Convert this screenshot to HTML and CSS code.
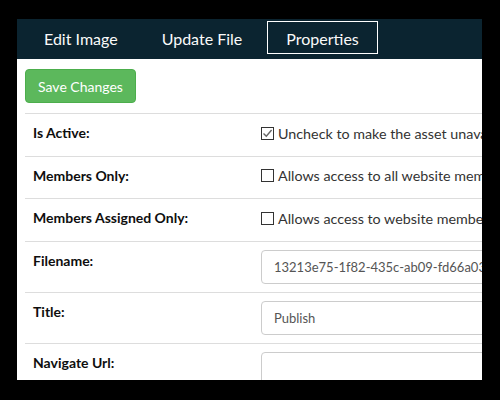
FILE: index.html
```html
<!DOCTYPE html>
<html>
<head>
<meta charset="utf-8">
<link rel="stylesheet" href="styles.css">
</head>
<body>
<div class="panel">
  <nav class="tabs">
    <a class="tab">Edit Image</a>
    <a class="tab">Update File</a>
    <a class="tab active">Properties</a>
  </nav>
  <div class="content">
    <button class="btn-save">Save Changes</button>
    <table class="props">
      <tr class="row-check">
        <th>Is Active:</th>
        <td><label class="chk-line"><span class="chk checked"><svg width="11" height="11" viewBox="0 0 11 11"><path d="M1.5 5.5 L4.3 8.3 L9.6 2" fill="none" stroke="#666" stroke-width="1.4"/></svg></span>Uncheck to make the asset unavailable to the website.</label></td>
      </tr>
      <tr class="row-check">
        <th>Members Only:</th>
        <td><label class="chk-line"><span class="chk"></span>Allows access to all website members only.</label></td>
      </tr>
      <tr class="row-check">
        <th>Members Assigned Only:</th>
        <td><label class="chk-line"><span class="chk"></span>Allows access to website members assigned.</label></td>
      </tr>
      <tr class="row-input">
        <th>Filename:</th>
        <td><input class="field" type="text" value="13213e75-1f82-435c-ab09-fd66a03b7e21.jpg"></td>
      </tr>
      <tr class="row-input">
        <th>Title:</th>
        <td><input class="field" type="text" value="Publish"></td>
      </tr>
      <tr class="row-input">
        <th>Navigate Url:</th>
        <td><input class="field" type="text" value=""></td>
      </tr>
    </table>
  </div>
</div>
</body>
</html>
```

FILE: styles.css
```css
html, body {
  margin: 0;
  padding: 0;
  background: #000;
}
body {
  width: 500px;
  height: 400px;
  overflow: hidden;
  font-family: Lato, "Open Sans", sans-serif;
}
.panel {
  margin: 19px 0 0 17px;
  width: 465px;
  height: 361px;
  background: #fff;
  overflow: hidden;
}
.tabs {
  display: flex;
  align-items: flex-start;
  gap: 6px;
  height: 38px;
  padding: 2px 0 0 8px;
  background: #0b2430;
}
.tab {
  display: block;
  padding: 4px 18px 2px;
  line-height: 25px;
  font-size: 16px;
  color: #fafafa;
  border: 1px solid transparent;
  white-space: nowrap;
}
.tab.active {
  border-color: #fff;
}
.content {
  padding: 10px 0 0 8px;
  width: 700px;
}
.btn-save {
  display: block;
  width: 111px;
  height: 34px;
  margin: 0 0 10px 0;
  padding: 0;
  background: #5cb85c;
  border: 1px solid #4cae4c;
  border-radius: 4px;
  color: #fff;
  font-family: inherit;
  font-size: 14px;
}
.props {
  border-collapse: collapse;
  width: 700px;
}
.props tr {
  border-top: 1px solid #ddd;
}
.props th {
  width: 220px;
  text-align: left;
  vertical-align: top;
  padding: 8px 8px 0;
  font-size: 14px;
  font-weight: bold;
  line-height: 22px;
  color: #0e0e0e;
  white-space: nowrap;
}
.props td {
  vertical-align: top;
  padding: 8px 0 0;
}
.row-check th, .row-check td {
  padding-bottom: 11.5px;
}
.row-input th, .row-input td {
  padding-bottom: 8px;
}
.chk-line {
  display: flex;
  align-items: center;
  height: 22px;
  font-size: 14.3px;
  color: #333;
  white-space: nowrap;
}
.chk {
  box-sizing: border-box;
  flex: none;
  width: 13px;
  height: 13px;
  border: 1px solid #333;
  margin-right: 4px;
  display: flex;
  align-items: center;
  justify-content: center;
  background: #fff;
}
.field {
  box-sizing: border-box;
  display: block;
  width: 400px;
  height: 34px;
  margin: 0;
  padding: 0 12px;
  border: 1px solid #ccc;
  border-radius: 4px;
  font-family: inherit;
  font-size: 13px;
  color: #555;
  background: #fff;
}
```
